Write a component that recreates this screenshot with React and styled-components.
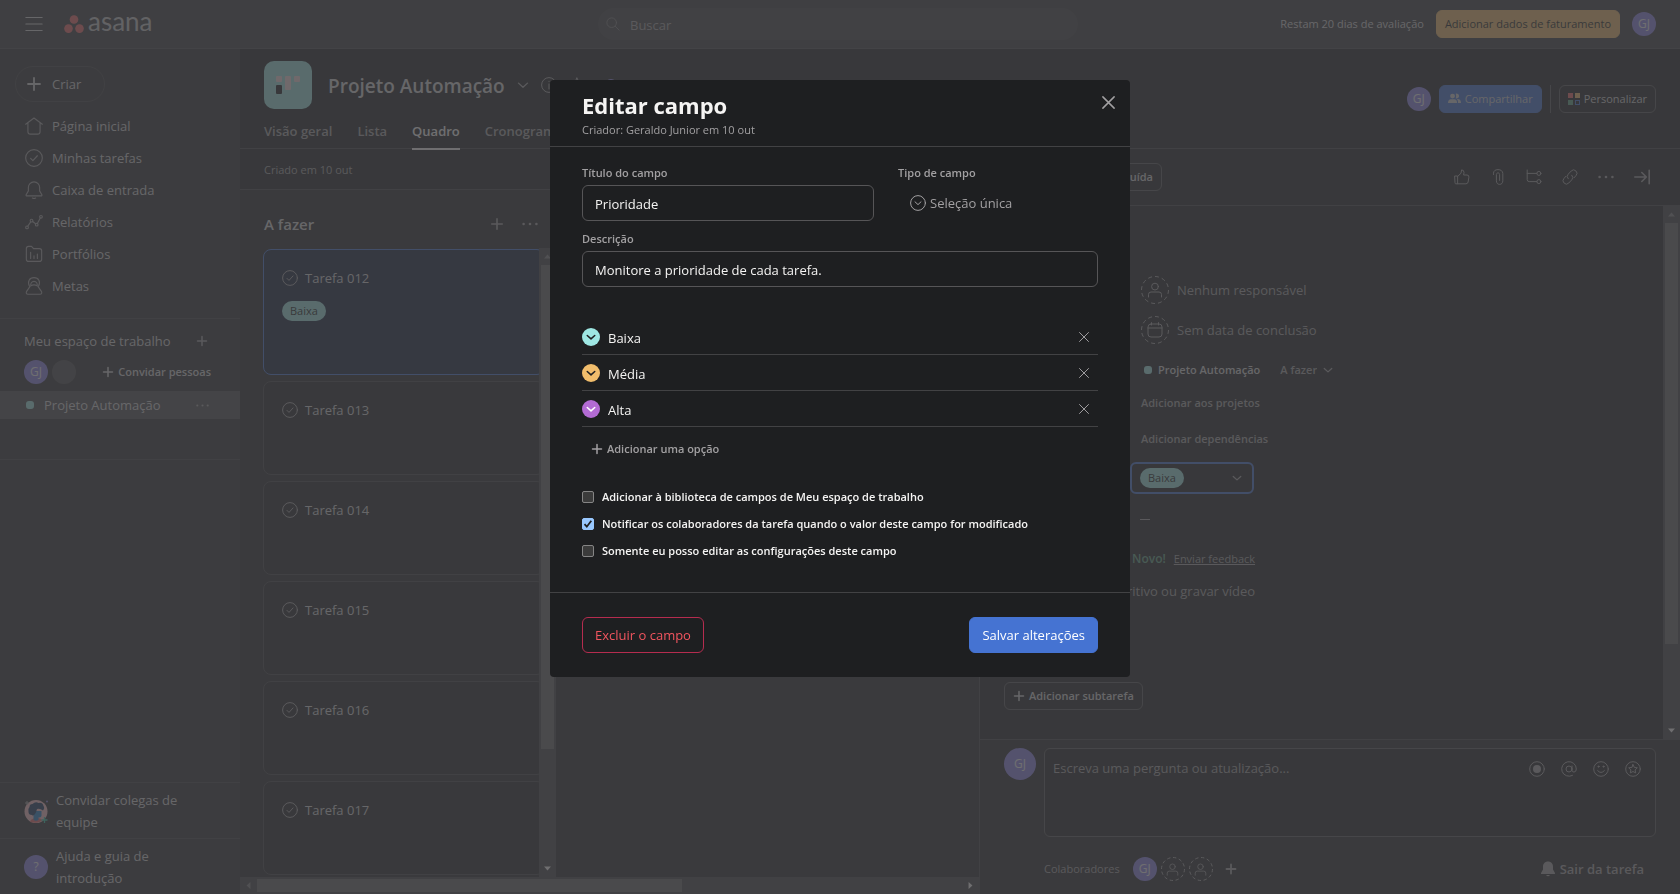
import React from "react";
import styled, { createGlobalStyle, css } from "styled-components";

const c = {
  text: "#f5f4f3",
  soft: "#d4d3d4",
  muted: "#a2a0a2",
  dim: "#7d7b7f",
  line: "#424244",
  field: "#565557",
  page: "#1e1f21",
  board: "#252628",
  side: "#2e2e30",
  top: "#3a3a3c",
  blue: "#4573d2",
  teal: "#9ee7e3",
  yellow: "#f1bd6c",
  purple: "#b36bd4",
  avatar: "#8d84e8",
};

const Global = createGlobalStyle`
  *, *::before, *::after { box-sizing: border-box; }
  body {
    margin: 0;
    background: ${c.page};
    color: ${c.text};
    font-family: "Open Sans", "Noto Sans", sans-serif;
    font-size: 13px;
    line-height: 20px;
  }
  button, input, select, textarea { font: inherit; color: inherit; margin: 0; }
  h1, h2, h3, p, ul { margin: 0; padding: 0; }
  ul { list-style: none; }
`;

/* ---------- shared parts ---------- */

const Svg = styled.svg.attrs({ viewBox: "0 0 16 16", "aria-hidden": true })`
  flex: none;
  width: ${(p) => p.$size || 16}px;
  height: ${(p) => p.$size || 16}px;
  fill: ${(p) => (p.$solid ? "currentColor" : "none")};
  stroke: ${(p) => (p.$solid ? "none" : "currentColor")};
  stroke-width: ${(p) => p.$weight || 1};
  stroke-linecap: round;
  stroke-linejoin: round;
`;

const Plus = (p) => <Svg $weight={1.8} {...p}><path d="M8 2v12M2 8h12" /></Svg>;
const Cross = (p) => <Svg {...p}><path d="M2 2l12 12M14 2L2 14" /></Svg>;
const Chevron = (p) => <Svg $weight={2} {...p}><path d="M2 5.500l6 5.500 6-5.500" /></Svg>;
const Dots = (p) => (
  <Svg $solid {...p}><circle cx="1.600" cy="8" r="1.300" /><circle cx="8" cy="8" r="1.300" /><circle cx="14.400" cy="8" r="1.300" /></Svg>
);
const CheckCircle = (p) => <Svg {...p}><circle cx="8" cy="8" r="7.400" /><path d="M5 8.400l2 2L11 6" /></Svg>;
const Home = (p) => <Svg {...p}><path d="M.6 6.400L8 .9l7.400 5.500M2.600 5v8q0 2.200 2.200 2.200h6.400q2.200 0 2.200-2.200V5" /></Svg>;
const Bell = (p) => <Svg {...p}><path d="M8 .8c-3 0-5 2.300-5 5v3L1 12.200q-.3 1 .7 1h12.600q1 0 .7-1L13 8.800v-3c0-2.700-2-5-5-5z" /><path d="M6.600 15.200q1.400.8 2.800 0" /></Svg>;
const Graph = (p) => (
  <Svg {...p}><circle cx="1.800" cy="12.800" r="1.200" /><circle cx="5.800" cy="6.800" r="1.200" /><circle cx="10.400" cy="10.400" r="1.200" /><circle cx="14.200" cy="3.400" r="1.200" /><path d="M2.500 11.700l2.600-3.800M6.800 7.600l2.600 2M11 9.300l2.600-4.800" /></Svg>
);
const Portfolio = (p) => (
  <Svg {...p}><path d="M1.200 3.200q0-2 2-2h2.600l1.800 2h5.200q2 0 2 2v7.400q0 2-2 2H3.200q-2 0-2-2zM5 6.500v5.500M8 9.500V12M11 8v4" /></Svg>
);
const Goals = (p) => (
  <Svg {...p}><path d="M4 8.200C1.800 4 4 .6 8 .6s6.200 3.400 4 7.600" /><path d="M5.300 7.800a2.900 2.900 0 1 1 5.400 0M5.300 7.800Q6.500 7 8 7t2.700.8M4.500 8.300L1.300 13q-.7 2.300 1.300 2.300h10.800q2 0 1.300-2.300l-3.200-4.700" /></Svg>
);
const Search = (p) => <Svg {...p}><circle cx="6.500" cy="6.500" r="5.500" /><path d="M10.600 10.600l4.400 4.400" /></Svg>;
const Person = (p) => <Svg {...p}><circle cx="8" cy="4.600" r="3.400" /><path d="M1.500 15v-2.500q0-2.500 2.500-2.500h8q2.500 0 2.500 2.500V15" /></Svg>;
const Calendar = (p) => <Svg {...p}><rect x="1" y="2" width="14" height="13" rx="3" /><path d="M1 6h14M4.500.6V3M11.500.6V3" /></Svg>;
const People = (p) => (
  <Svg $solid {...p}><circle cx="5.600" cy="5" r="3" /><path d="M0 13.500q0-4.700 3.700-4.700h3.800q3.700 0 3.700 4.700z" /><path d="M9.500 2.200a3 3 0 1 1 0 5.600q1.200-2.800 0-5.600zM12.400 13.500q.2-3.200-1.400-4.700Q16 8.300 16 13.500z" /></Svg>
);
const Like = (p) => <Svg {...p}><path d="M1 7h2.600v7.800H1.800Q1 14.800 1 14zM3.600 7.500L7 4.200 7.600.9q2.400 0 2.400 2.600L9.600 6H13q2.200 0 1.900 2.200l-.8 4.800q-.4 1.800-2.200 1.800H3.600" /></Svg>;
const Clip = (p) => <Svg {...p}><path d="M3.500 5.500V4.200C3.500 2 5.300.6 8 .6s4.800 1.400 4.800 3.900v7.300c0 2.200-1.300 3.600-3.200 3.600s-3.200-1.400-3.200-3.600V5.600c0-1 .6-1.700 1.600-1.700s1.600.7 1.600 1.700v5.800" /></Svg>;
const Subtask = (p) => (
  <Svg {...p}><path d="M1.200 1v9.600q0 2 2 2h7.600M1.200 4.400h9.600" /><circle cx="12.900" cy="4.400" r="2" /><circle cx="12.900" cy="12.600" r="2" /></Svg>
);
const Link = (p) => (
  <Svg {...p}><path d="M6.200 9.800a3.300 3.300 0 0 1 0-4.600l3-3.200a3.300 3.300 0 0 1 4.800 4.600l-2 2.200" /><path d="M9.800 6.200a3.300 3.300 0 0 1 0 4.600l-3 3.200A3.300 3.300 0 0 1 2 9.400l2-2.200" /></Svg>
);
const Collapse = (p) => <Svg $weight={1.600} {...p}><path d="M.8 8h11.400M7.800 3.500L12.300 8l-4.500 4.500M15.200 1.200v13.600" /></Svg>;
const Record = (p) => <Svg {...p}><circle cx="8" cy="8" r="7.300" /><circle cx="8" cy="8" r="4" fill="currentColor" stroke="none" /></Svg>;
const At = (p) => <Svg {...p}><circle cx="8" cy="8" r="3" /><path d="M11 5v4.200q.2 1.900 2 1.900 2.300-.2 2.300-3.100A7.300 7.300 0 1 0 11.500 14.400" /></Svg>;
const Smile = (p) => (
  <Svg {...p}><circle cx="8" cy="8" r="7.300" /><path d="M4.600 9.600q3.400 4 6.800 0" /><circle cx="5.500" cy="5.600" r=".6" fill="currentColor" /><circle cx="10.500" cy="5.600" r=".6" fill="currentColor" /></Svg>
);
const StarCircle = (p) => <Svg {...p}><circle cx="8" cy="8" r="7.300" /><path d="M8 3.600l1.300 2.800 3 .4-2.200 2.100.6 3L8 10.500l-2.700 1.400.6-3-2.200-2.100 3-.4z" /></Svg>;
const Star = (p) => <Svg {...p}><path d="M8 1l2.100 4.500 4.900.6-3.600 3.400.9 4.900L8 12l-4.300 2.400.9-4.900L1 6.100l4.900-.6z" /></Svg>;
const Info = (p) => <Svg {...p}><circle cx="8" cy="8" r="7.400" /><path d="M8 7v5M8 4.300v.2" /></Svg>;
const SingleSelect = (p) => <Svg {...p}><circle cx="8" cy="8" r="7.400" /><path d="M5 6.800l3 2.800 3-2.800" /></Svg>;

const Avatar = styled.span`
  flex: none;
  display: inline-grid;
  place-items: center;
  width: ${(p) => p.$size || 24}px;
  height: ${(p) => p.$size || 24}px;
  border-radius: 50%;
  background: ${(p) => (p.$empty ? "#4a4a4c" : c.avatar)};
  color: ${c.text};
  font-size: 12px;
`;

const Ring = styled.span`
  flex: none;
  display: inline-grid;
  place-items: center;
  width: ${(p) => p.$size}px;
  height: ${(p) => p.$size}px;
  color: ${c.muted};
  > * { grid-area: 1 / 1; }
`;
const RingLine = styled.svg`
  width: 100%;
  height: 100%;
  fill: none;
  stroke: currentColor;
`;
function DashedCircle({ size, children }) {
  return (
    <Ring $size={size}>
      <RingLine viewBox={`0 0 ${size} ${size}`} aria-hidden="true">
        <circle cx={size / 2} cy={size / 2} r={size / 2 - 0.5} pathLength="96" strokeDasharray="4.500 3.500" />
      </RingLine>
      {children}
    </Ring>
  );
}

const IconButton = styled.button`
  flex: none;
  display: inline-grid;
  place-items: center;
  padding: 0;
  border: 0;
  background: none;
  color: ${(p) => p.$color || c.muted};
`;

const Dot = styled.span`
  flex: none;
  width: 8px;
  height: 8px;
  border-radius: 3px;
  background: ${c.teal};
`;

const SmallButton = styled.button`
  flex: none;
  display: inline-flex;
  align-items: center;
  gap: 4px;
  height: 28px;
  padding: 0 8px;
  border: 1px solid ${(p) => p.$bg || c.field};
  border-radius: 6px;
  background: ${(p) => p.$bg || "transparent"};
  color: ${(p) => p.$color || c.text};
  font-size: 11px;
  font-weight: ${(p) => p.$bold || 500};
  white-space: nowrap;
`;

/* ---------- scroll bars ---------- */

const Track = styled.div`
  flex: none;
  display: flex;
  flex-direction: ${(p) => (p.$row ? "row" : "column")};
  ${(p) => (p.$row ? "height: 17px; padding: 2px 0;" : "width: 17px; padding: 0 2px;")}
  background: ${c.line};
`;
const Thumb = styled.div`
  flex: ${(p) => p.$grow} 0 0;
  background: ${(p) => (p.$rest ? "transparent" : "#646466")};
`;
const Arrow = styled.svg.attrs({ viewBox: "0 0 17 17", "aria-hidden": true })`
  flex: none;
  width: ${(p) => (p.$row ? 17 : 13)}px;
  height: ${(p) => (p.$row ? 13 : 17)}px;
  fill: ${(p) => (p.$on ? c.text : "#7e7e80")};
`;

function ScrollBar({ row, thumb, rest }) {
  const first = row ? "M11 4v9L6 8.500z" : "M4 11h9L8.500 6z";
  const last = row ? "M6 4v9l5-4.500z" : "M4 6h9L8.500 11z";
  return (
    <Track $row={row}>
      <Arrow $row={row}><path d={first} /></Arrow>
      <Thumb $grow={thumb} />
      <Thumb $grow={rest} $rest />
      <Arrow $row={row} $on><path d={last} /></Arrow>
    </Track>
  );
}

/* ---------- frame ---------- */

const Shell = styled.div`
  display: flex;
  flex-direction: column;
  height: 100vh;
`;
const TopBar = styled.header`
  flex: none;
  display: grid;
  grid-template-columns: 1fr 480px 1fr;
  align-items: center;
  height: 49px;
  padding: 0 24px 0 20px;
  border-bottom: 1px solid #4a4a4c;
  background: ${c.top};
`;
const Brand = styled.div`
  display: flex;
  align-items: center;
  gap: 20px;
  padding-left: 4px;
  color: ${c.text};
`;
const Logo = styled.a`
  display: flex;
  align-items: center;
  gap: 4px;
  padding-bottom: 6px;
  color: #c4c3c4;
  font-family: Lato, sans-serif;
  font-size: 26px;
  line-height: 32px;
  text-decoration: none;
`;
const LogoDots = styled.svg`
  width: 20px;
  height: 18px;
  margin-top: 6px;
  fill: #f06a6a;
`;
const SearchBox = styled.label`
  display: flex;
  align-items: center;
  gap: 10px;
  height: 32px;
  padding: 0 8px;
  border-radius: 16px;
  background: ${c.line};
  color: ${c.dim};
`;
const SearchInput = styled.input`
  flex: 1;
  border: 0;
  padding: 2px 0 0;
  background: none;
  outline: none;
  &::placeholder { color: ${c.muted}; opacity: 1; }
`;
const Account = styled.div`
  display: flex;
  align-items: center;
  justify-content: flex-end;
  gap: 12px;
  color: ${c.soft};
  font-size: 11px;
  font-weight: 500;
  white-space: nowrap;
`;
const Body = styled.div`
  flex: 1;
  display: flex;
  min-height: 0;
`;

/* ---------- sidebar ---------- */

const Sidebar = styled.nav`
  flex: none;
  display: flex;
  flex-direction: column;
  width: 240px;
  background: ${c.side};
  color: ${c.soft};
  font-weight: 500;
`;
const CreateButton = styled.button`
  display: flex;
  align-items: center;
  align-self: flex-start;
  gap: 10px;
  height: 36px;
  margin: 17px 15px 8px;
  padding: 0 23px 0 10px;
  border: 1px solid ${c.line};
  border-radius: 18px;
  background: none;
`;
const SideLink = styled.a`
  display: flex;
  align-items: center;
  gap: 9px;
  height: 32px;
  padding: 0 25px;
  color: inherit;
  text-decoration: none;
  svg { color: ${c.muted}; }
`;
const Section = styled.section`
  margin-top: 16px;
  padding: 10px 0 40px;
  border: solid ${c.line};
  border-width: 1px 0;
`;
const SectionRow = styled.div`
  display: flex;
  align-items: center;
  justify-content: space-between;
  height: ${(p) => p.$h}px;
  padding: 0 ${(p) => p.$right}px 0 24px;
  background: ${(p) => (p.$active ? "#4e4e50" : "none")};
`;
const SectionTitle = styled.h2`
  font-size: 13px;
  font-weight: 500;
`;
const Pair = styled.span`
  display: flex;
  align-items: center;
  gap: 4px;
`;
const TextButton = styled.button`
  display: inline-flex;
  align-items: center;
  gap: 4px;
  padding: 0;
  border: 0;
  background: none;
  color: ${(p) => p.$color || "inherit"};
  font-size: ${(p) => p.$size || 11}px;
  font-weight: 600;
  white-space: nowrap;
`;
const ProjectLink = styled.a`
  display: flex;
  align-items: center;
  gap: 10px;
  padding-left: 2px;
  color: inherit;
  text-decoration: none;
`;
const Spacer = styled.div`
  flex: 1;
`;
const FootLink = styled.a`
  display: flex;
  align-items: center;
  gap: 8px;
  height: 56px;
  padding: 0 40px 0 24px;
  border-top: 1px solid ${c.line};
  color: ${c.soft};
  font-weight: 400;
  line-height: 22px;
  text-decoration: none;
`;
const InviteArt = styled.svg`
  flex: none;
  width: 24px;
  height: 24px;
`;

/* ---------- project ---------- */

const Main = styled.main`
  flex: 1;
  display: flex;
  flex-direction: column;
  min-width: 0;
`;
const ProjectHeader = styled.header`
  position: relative;
  z-index: 1;
  flex: none;
  display: flex;
  justify-content: space-between;
  height: 100px;
  padding: 0 24px;
  border-bottom: 1px solid ${c.line};
`;
const ProjectLeft = styled.div`
  display: flex;
  flex-direction: column;
  padding-top: 12px;
`;
const TitleRow = styled.div`
  display: flex;
  align-items: center;
  gap: 12px;
`;
const ProjectTile = styled.svg`
  width: 48px;
  height: 48px;
  margin-right: 4px;
  border-radius: 10px;
  background: ${c.teal};
`;
const ProjectTitle = styled.h1`
  padding-top: 2px;
  font-size: 19px;
  line-height: 28px;
  font-weight: 600;
  color: ${c.soft};
  white-space: nowrap;
`;
const StatusRing = styled.span`
  width: 12px;
  height: 12px;
  margin-left: 8px;
  border: 2px solid ${c.avatar};
  border-radius: 50%;
`;
const Tabs = styled.div`
  display: flex;
  gap: 25px;
  padding-top: 9px;
`;
const Tab = styled.a`
  height: 32px;
  padding-top: 3px;
  border-bottom: 2px solid ${(p) => (p.$on ? c.text : "transparent")};
  color: ${(p) => (p.$on ? c.text : c.muted)};
  font-weight: 600;
  text-decoration: none;
  white-space: nowrap;
`;
const ProjectRight = styled.div`
  display: flex;
  align-items: center;
  gap: 8px;
`;
const Palette = styled.svg`
  flex: none;
  width: 12px;
  height: 12px;
`;
const Rule = styled.span`
  width: 1px;
  height: 28px;
  background: ${c.field};
`;
const Work = styled.div`
  flex: 1;
  display: flex;
  min-height: 0;
`;
const Board = styled.section`
  flex: 1;
  display: flex;
  flex-direction: column;
  min-width: 0;
  background: ${c.board};
`;
const BoardBar = styled.div`
  flex: none;
  height: 41px;
  padding: 11px 24px 0;
  border-bottom: 1px solid ${c.line};
  background: ${c.page};
  color: ${c.muted};
  font-size: 11px;
  font-weight: 500;
`;
const Column = styled.div`
  flex: 1;
  display: flex;
  flex-direction: column;
  width: 316px;
  min-height: 0;
`;
const ColumnHead = styled.div`
  flex: none;
  display: flex;
  align-items: center;
  gap: 18px;
  height: 58px;
  padding: 10px 18px 0 24px;
`;
const ColumnTitle = styled.h2`
  flex: 1;
  font-size: 15px;
  font-weight: 600;
  color: ${c.soft};
`;
const ColumnBody = styled.div`
  flex: 1;
  display: flex;
  min-height: 0;
`;
const CardList = styled.ul`
  flex: 1;
  display: flex;
  flex-direction: column;
  gap: 6px;
  min-width: 0;
  padding: 1px 0 0 23px;
  overflow: hidden;
`;
const Card = styled.li`
  flex: none;
  width: 282px;
  height: ${(p) => (p.$on ? 126 : 94)}px;
  padding: 18px;
  border: 1px solid ${(p) => (p.$on ? c.blue : c.line)};
  border-radius: 8px;
  background: ${(p) => (p.$on ? "#16213a" : "#222325")};
`;
const CardTitle = styled.div`
  display: flex;
  align-items: center;
  gap: 7px;
  color: ${c.soft};
  svg { color: ${c.muted}; }
`;
const pill = css`
  height: 20px;
  padding: 0 8px;
  border: 0;
  border-radius: 10px;
  background: ${c.teal};
  color: ${c.page};
  font-size: 11px;
  line-height: 20px;
`;
const Tag = styled.span`
  display: inline-block;
  margin-top: 13px;
  ${pill}
`;

/* ---------- task pane ---------- */

const Pane = styled.aside`
  flex: none;
  display: flex;
  flex-direction: column;
  width: 701px;
  border-left: 1px solid ${c.line};
`;
const PaneBar = styled.div`
  flex: none;
  display: flex;
  align-items: center;
  justify-content: space-between;
  height: 57px;
  padding: 0 30px 0 24px;
  border-bottom: 1px solid ${c.line};
`;
const PaneTools = styled.div`
  display: flex;
  gap: 20px;
`;
const PaneScroll = styled.div`
  flex: 1;
  display: flex;
  min-height: 0;
`;
const PaneBody = styled.div`
  flex: 1;
  display: flex;
  flex-direction: column;
  padding: 64px 24px 0;
  overflow: hidden;
`;
const Field = styled.div`
  flex: none;
  display: flex;
  align-items: center;
  gap: ${(p) => p.$gap || 8}px;
  height: ${(p) => p.$h}px;
  padding-left: ${(p) => p.$in}px;
  color: ${c.muted};
`;
const SectionPick = styled.label`
  display: flex;
  align-items: center;
  gap: 6px;
  margin-left: 14px;
`;
const BareSelect = styled.select`
  appearance: none;
  border: 0;
  padding: 0;
  background: none;
  color: ${c.muted};
  font-size: 11px;
  font-weight: 600;
`;
const PillSelect = styled.select`
  appearance: none;
  ${pill}
`;
const SelectBox = styled.label`
  display: flex;
  align-items: center;
  justify-content: space-between;
  width: 124px;
  height: 32px;
  padding: 0 10px 0 8px;
  border: 2px solid ${c.blue};
  border-radius: 6px;
`;
const Fresh = styled.strong`
  color: #5da283;
  font-size: 12px;
  font-weight: 600;
`;
const Feedback = styled.a`
  color: ${c.muted};
  font-size: 11px;
  font-weight: 500;
`;
const Dash = styled.span`
  width: 10px;
  height: 1px;
  background: ${c.muted};
`;
const DescriptionHint = styled.p`
  flex: none;
  height: 24px;
  margin-top: 7px;
  color: ${c.muted};
  font-weight: 500;
`;
const SubtaskRow = styled.div`
  margin-top: 77px;
`;
const Composer = styled.footer`
  flex: none;
  display: grid;
  grid-template-columns: 32px 1fr;
  column-gap: 8px;
  padding: 8px 24px 13px;
  border-top: 1px solid ${c.line};
  background: ${c.board};
`;
const CommentBox = styled.div`
  display: flex;
  align-items: flex-start;
  height: 89px;
  padding: 0 14px 0 8px;
  border: 1px solid ${c.field};
  border-radius: 6px;
  background: ${c.page};
`;
const CommentInput = styled.textarea`
  flex: 1;
  height: 80px;
  padding: 9px 0 0;
  border: 0;
  background: none;
  outline: none;
  resize: none;
  &::placeholder { color: ${c.muted}; opacity: 1; }
`;
const CommentTools = styled.div`
  display: flex;
  gap: 16px;
  padding-top: 12px;
`;
const Followers = styled.div`
  grid-column: 2;
  display: flex;
  align-items: center;
  gap: 4px;
  height: 24px;
  margin-top: 20px;
  color: ${c.muted};
  font-size: 11px;
  font-weight: 500;
`;
const FollowersLabel = styled.span`
  margin-right: 9px;
`;
const AddFollower = styled(IconButton)`
  margin-left: 8px;
`;
const Leave = styled(TextButton)`
  margin: 0 12px 0 auto;
`;

/* ---------- dialog ---------- */

const Backdrop = styled.div`
  position: fixed;
  inset: 0;
  z-index: 10;
  display: flex;
  align-items: flex-start;
  justify-content: center;
  padding-top: 80px;
  background: rgba(66, 66, 68, 0.75);
`;
const Dialog = styled.section`
  width: 580px;
  border-radius: 4px;
  background: ${c.page};
`;
const DialogHead = styled.header`
  display: flex;
  justify-content: space-between;
  height: 67px;
  padding: 9px 14px 0 32px;
  border-bottom: 1px solid ${c.line};
`;
const DialogTitle = styled.h2`
  font-size: 22px;
  line-height: 32px;
  font-weight: 700;
`;
const DialogNote = styled.p`
  color: ${c.muted};
  font-size: 11px;
  line-height: 18px;
  font-weight: 500;
`;
const CloseButton = styled(IconButton)`
  height: 26px;
  width: 16px;
`;
const DialogBody = styled.div`
  padding: 18px 32px 28px;
`;
const Columns = styled.div`
  display: grid;
  grid-template-columns: 292px 1fr;
  column-gap: 24px;
`;
const Label = styled.label`
  display: block;
  height: 20px;
  color: ${c.muted};
  font-size: 11px;
  line-height: 16px;
  font-weight: 600;
`;
const TextInput = styled.input`
  display: block;
  width: 100%;
  height: 36px;
  margin-bottom: 10px;
  padding: 2px 12px 0;
  border: 1px solid ${c.field};
  border-radius: 6px;
  background: none;
  font-weight: 500;
`;
const TypeValue = styled.div`
  display: flex;
  align-items: center;
  gap: 4px;
  height: 36px;
  padding-left: 12px;
  color: ${c.muted};
  font-weight: 500;
`;
const Options = styled.ul`
  margin-top: 32px;
`;
const Option = styled.li`
  display: flex;
  align-items: center;
  gap: 8px;
  height: 36px;
  padding-right: 8px;
  border-bottom: 1px solid ${c.line};
`;
const Swatch = styled.button`
  display: grid;
  place-items: center;
  width: 18px;
  height: 18px;
  padding: 0;
  border: 0;
  border-radius: 50%;
  background: ${(p) => p.$bg};
  color: ${(p) => p.$fg};
`;
const OptionInput = styled.input`
  flex: 1;
  padding: 2px 0 0;
  border: 0;
  background: none;
  outline: none;
  font-weight: 500;
`;
const AddOption = styled(TextButton)`
  height: 20px;
  margin: 12px 0 24px 9px;
  color: ${c.muted};
`;
const Check = styled.label`
  display: flex;
  align-items: center;
  gap: 8px;
  height: 27px;
  font-size: 11px;
  font-weight: 600;
`;
const Box = styled.input`
  appearance: none;
  width: 12px;
  height: 12px;
  margin: 0;
  border: 1px solid #858585;
  border-radius: 2px;
  background: #3b3b3b;
  &:checked {
    border-color: #99c8ff;
    background: #99c8ff url("data:image/svg+xml,%3Csvg xmlns='http://www.w3.org/2000/svg' viewBox='0 0 10 10'%3E%3Cpath d='M1.500 5.200l2.300 2.500 4.500-6' fill='none' stroke='%231e1f21' stroke-width='1.800'/%3E%3C/svg%3E");
  }
`;
const DialogFoot = styled.footer`
  display: flex;
  justify-content: space-between;
  padding: 24px 32px;
  border-top: 1px solid ${c.line};
`;
const ActionButton = styled.button`
  height: 36px;
  padding: 0 12px;
  border: 1px solid ${(p) => (p.$danger ? "#b52c4f" : c.blue)};
  border-radius: 6px;
  background: ${(p) => (p.$danger ? "none" : c.blue)};
  color: ${(p) => (p.$danger ? "#f2555f" : "#fff")};
`;

const navItems = [
  ["Página inicial", Home],
  ["Minhas tarefas", CheckCircle],
  ["Caixa de entrada", Bell],
  ["Relatórios", Graph],
  ["Portfólios", Portfolio],
  ["Metas", Goals],
];
const tasks = ["Tarefa 012", "Tarefa 013", "Tarefa 014", "Tarefa 015", "Tarefa 016", "Tarefa 017"];
const paneTools = [
  ["Curtir", Like],
  ["Anexar", Clip],
  ["Subtarefas", Subtask],
  ["Copiar link", Link],
  ["Mais", Dots],
  ["Fechar", Collapse],
];
const commentTools = [
  ["Gravar", Record],
  ["Mencionar", At],
  ["Emoji", Smile],
  ["Figurinha", StarCircle],
];
const options = [
  ["Baixa", c.teal, c.page],
  ["Média", c.yellow, c.page],
  ["Alta", c.purple, "#fff"],
];
const settings = [
  ["Adicionar à biblioteca de campos de Meu espaço de trabalho", false],
  ["Notificar os colaboradores da tarefa quando o valor deste campo for modificado", true],
  ["Somente eu posso editar as configurações deste campo", false],
];

function Header() {
  return (
    <TopBar>
      <Brand>
        <IconButton aria-label="Menu" $color={c.soft}>
          <Svg $size={20} $weight={0.900}><path d="M1.500 2.800h13M1.500 8h13M1.500 13.200h13" /></Svg>
        </IconButton>
        <Logo href="#">
          <LogoDots viewBox="0 0 20 18" aria-hidden="true"><circle cx="10" cy="4.500" r="4.300" /><circle cx="4.500" cy="13.600" r="4.300" /><circle cx="15.500" cy="13.600" r="4.300" /></LogoDots>
          asana
        </Logo>
      </Brand>
      <SearchBox>
        <Search $size={14} />
        <SearchInput type="search" placeholder="Buscar" aria-label="Buscar" />
      </SearchBox>
      <Account>
        Restam 20 dias de avaliação
        <SmallButton $bg={c.yellow} $color={c.page}>Adicionar dados de faturamento</SmallButton>
        <Avatar>GJ</Avatar>
      </Account>
    </TopBar>
  );
}

function Side() {
  return (
    <Sidebar>
      <CreateButton><Plus $size={16} />Criar</CreateButton>
      {navItems.map(([name, Icon]) => (
        <SideLink href="#" key={name}><Icon $size={18} />{name}</SideLink>
      ))}
      <Section>
        <SectionRow $h={24} $right={32}>
          <SectionTitle>Meu espaço de trabalho</SectionTitle>
          <IconButton aria-label="Adicionar"><Plus $size={12} $weight={2} /></IconButton>
        </SectionRow>
        <SectionRow $h={38} $right={29}>
          <Pair><Avatar>GJ</Avatar><Avatar $empty /></Pair>
          <TextButton><Plus $size={12} $weight={2} />Convidar pessoas</TextButton>
        </SectionRow>
        <SectionRow $h={28} $right={31} $active>
          <ProjectLink href="#"><Dot />Projeto Automação</ProjectLink>
          <IconButton aria-label="Mais"><Dots $size={13} /></IconButton>
        </SectionRow>
      </Section>
      <Spacer />
      <FootLink href="#">
        <InviteArt viewBox="0 0 24 24" aria-hidden="true">
          <circle cx="12" cy="12.500" r="11.500" fill="#f9bfc4" />
          <path d="M6 23q.5-3.500 6-4t6 2.500l-3 1.800q-4.500 1.200-9-.3z" fill="#f06a6a" />
          <path d="M10 12h7.500v5q-1 2-3 1.500V21q-2.500 1.500-5 0v-4z" fill="#2580c8" />
          <path d="M4.500 13q-1-3 1-5 0-3 3-3 3-3 6-1 4-1 5 3 1.500 2-.5 4.500-3-2.500-6-1.500-1 4-2 5-2 2.500-3 1-3.500 0-3.500-3z" fill="#1d3a60" />
          <path d="M3 2v4M1 4h4" stroke="#a2a0a2" />
          <path d="M20.500 18v6M17.500 21h6" stroke="#37c5ab" strokeWidth="1.300" />
          <circle cx="23" cy="2.500" r="1" fill="#8d84e8" />
        </InviteArt>
        Convidar colegas de equipe
      </FootLink>
      <FootLink href="#"><Avatar>?</Avatar>Ajuda e guia de introdução</FootLink>
    </Sidebar>
  );
}

function BoardView() {
  return (
    <Board>
      <BoardBar>Criado em 10 out</BoardBar>
      <Column>
        <ColumnHead>
          <ColumnTitle>A fazer</ColumnTitle>
          <IconButton aria-label="Adicionar tarefa"><Plus $size={14} $weight={1.800} /></IconButton>
          <IconButton aria-label="Mais ações"><Dots $size={16} /></IconButton>
        </ColumnHead>
        <ColumnBody>
          <CardList>
            {tasks.map((name, i) => (
              <Card key={name} $on={i === 0}>
                <CardTitle><CheckCircle />{name}</CardTitle>
                {i === 0 && <Tag>Baixa</Tag>}
              </Card>
            ))}
          </CardList>
          <ScrollBar thumb={484} rest={111} />
        </ColumnBody>
      </Column>
      <ScrollBar row thumb={425} rest={280} />
    </Board>
  );
}

function TaskPane() {
  return (
    <Pane>
      <PaneBar>
        <SmallButton $bold={600} $color={c.soft}><Svg $size={12} $weight={1.500}><path d="M2 8.500l4 4L14 4" /></Svg>Marcar como concluída</SmallButton>
        <PaneTools>
          {paneTools.map(([name, Icon]) => (
            <IconButton key={name} aria-label={name}><Icon /></IconButton>
          ))}
        </PaneTools>
      </PaneBar>
      <PaneScroll>
        <PaneBody>
          <Field $h={40} $in={137}><DashedCircle size={28}><Person /></DashedCircle>Nenhum responsável</Field>
          <Field $h={40} $in={137}><DashedCircle size={28}><Calendar /></DashedCircle>Sem data de conclusão</Field>
          <Field $h={40} $in={140} $gap={6}>
            <Dot />
            <TextButton $color={c.soft}>Projeto Automação</TextButton>
            <SectionPick>
              <BareSelect aria-label="Seção"><option>A fazer</option></BareSelect>
              <Chevron $size={10} />
            </SectionPick>
          </Field>
          <Field $h={25} $in={137}><TextButton>Adicionar aos projetos</TextButton></Field>
          <Field $h={47} $in={137}><TextButton>Adicionar dependências</TextButton></Field>
          <Field $h={32} $in={126}>
            <SelectBox>
              <PillSelect aria-label="Prioridade"><option>Baixa</option></PillSelect>
              <Chevron $size={10} />
            </SelectBox>
          </Field>
          <Field $h={50} $in={136}><Dash /></Field>
          <Field $h={30} $in={128}><Fresh>Novo!</Fresh><Feedback href="#">Enviar feedback</Feedback></Field>
          <DescriptionHint>Adicionar texto descritivo ou gravar vídeo</DescriptionHint>
          <SubtaskRow>
            <SmallButton $bold={600} $color={c.soft}><Plus $size={12} $weight={2} />Adicionar subtarefa</SmallButton>
          </SubtaskRow>
        </PaneBody>
        <ScrollBar thumb={421} rest={78} />
      </PaneScroll>
      <Composer>
        <Avatar $size={32}>GJ</Avatar>
        <CommentBox>
          <CommentInput placeholder="Escreva uma pergunta ou atualização..." aria-label="Comentário" />
          <CommentTools>
            {commentTools.map(([name, Icon]) => (
              <IconButton key={name} aria-label={name}><Icon /></IconButton>
            ))}
          </CommentTools>
        </CommentBox>
        <Followers>
          <FollowersLabel>Colaboradores</FollowersLabel>
          <Avatar>GJ</Avatar>
          <DashedCircle size={24}><Person $size={13} /></DashedCircle>
          <DashedCircle size={24}><Person $size={13} /></DashedCircle>
          <AddFollower aria-label="Adicionar colaborador"><Plus $size={12} $weight={2.400} /></AddFollower>
          <Leave $size={13}>
            <Svg $solid><path d="M8 .5c-3 0-5 2.200-5 5v3l-2 3.600q-.2 1 .8 1h12.400q1 0 .8-1L13 8.500v-3c0-2.800-2-5-5-5zM6 14h4q-2 2.400-4 0z" /></Svg>
            Sair da tarefa
          </Leave>
        </Followers>
      </Composer>
    </Pane>
  );
}

function FieldDialog() {
  return (
    <Backdrop>
      <Dialog role="dialog" aria-modal="true" aria-labelledby="dialog-title">
        <DialogHead>
          <div>
            <DialogTitle id="dialog-title">Editar campo</DialogTitle>
            <DialogNote>Criador: Geraldo Junior em 10 out</DialogNote>
          </div>
          <CloseButton aria-label="Fechar"><Cross $size={15} $weight={1.600} /></CloseButton>
        </DialogHead>
        <DialogBody>
          <Columns>
            <div>
              <Label htmlFor="title">Título do campo</Label>
              <TextInput id="title" defaultValue="Prioridade" />
            </div>
            <div>
              <Label as="span">Tipo de campo</Label>
              <TypeValue><SingleSelect />Seleção única</TypeValue>
            </div>
          </Columns>
          <Label htmlFor="description">Descrição</Label>
          <TextInput id="description" defaultValue="Monitore a prioridade de cada tarefa." />
          <Options>
            {options.map(([name, bg, fg]) => (
              <Option key={name}>
                <Swatch $bg={bg} $fg={fg} aria-label={`Cor de ${name}`}><Chevron $size={10} $weight={2.400} /></Swatch>
                <OptionInput defaultValue={name} aria-label={`Opção ${name}`} />
                <IconButton aria-label={`Remover ${name}`}><Cross $size={12} $weight={1.300} /></IconButton>
              </Option>
            ))}
          </Options>
          <AddOption><Plus $size={12} $weight={2} />Adicionar uma opção</AddOption>
          {settings.map(([name, on]) => (
            <Check key={name}><Box type="checkbox" defaultChecked={on} />{name}</Check>
          ))}
        </DialogBody>
        <DialogFoot>
          <ActionButton $danger>Excluir o campo</ActionButton>
          <ActionButton>Salvar alterações</ActionButton>
        </DialogFoot>
      </Dialog>
    </Backdrop>
  );
}

export default function App() {
  return (
    <>
      <Global />
      <Shell>
        <Header />
        <Body>
          <Side />
          <Main>
            <ProjectHeader>
              <ProjectLeft>
                <TitleRow>
                  <ProjectTile viewBox="0 0 48 48" aria-hidden="true">
                    <g fill="#f9dde0"><rect x="12" y="15" width="6" height="6" rx="1" /><rect x="21" y="15" width="6" height="14" rx="1" /><rect x="30" y="15" width="6" height="6" rx="1" /></g>
                    <rect x="12" y="24" width="6" height="9" rx="1" fill="#1e1f21" />
                  </ProjectTile>
                  <ProjectTitle>Projeto Automação</ProjectTitle>
                  <IconButton aria-label="Opções do projeto"><Chevron $size={12} $weight={1.800} /></IconButton>
                  <IconButton aria-label="Detalhes"><Info /></IconButton>
                  <IconButton aria-label="Favoritar"><Star /></IconButton>
                  <StatusRing />
                </TitleRow>
                <Tabs>
                  <Tab href="#">Visão geral</Tab>
                  <Tab href="#">Lista</Tab>
                  <Tab href="#" $on>Quadro</Tab>
                  <Tab href="#">Cronograma</Tab>
                </Tabs>
              </ProjectLeft>
              <ProjectRight>
                <Avatar>GJ</Avatar>
                <SmallButton $bg={c.blue} $color={c.soft}><People $size={13} />Compartilhar</SmallButton>
                <Rule />
                <SmallButton $color={c.soft}>
                  <Palette viewBox="0 0 12 12" aria-hidden="true">
                    <rect width="5" height="5" fill="#f06a6a" /><rect x="7" width="5" height="5" fill="#f1bd6c" />
                    <rect y="7" width="5" height="5" fill="#5da283" /><rect x="7.500" y="7.500" width="4" height="4" fill="none" stroke="#4573d2" />
                  </Palette>
                  Personalizar
                </SmallButton>
              </ProjectRight>
            </ProjectHeader>
            <Work>
              <BoardView />
              <TaskPane />
            </Work>
          </Main>
        </Body>
      </Shell>
      <FieldDialog />
    </>
  );
}
